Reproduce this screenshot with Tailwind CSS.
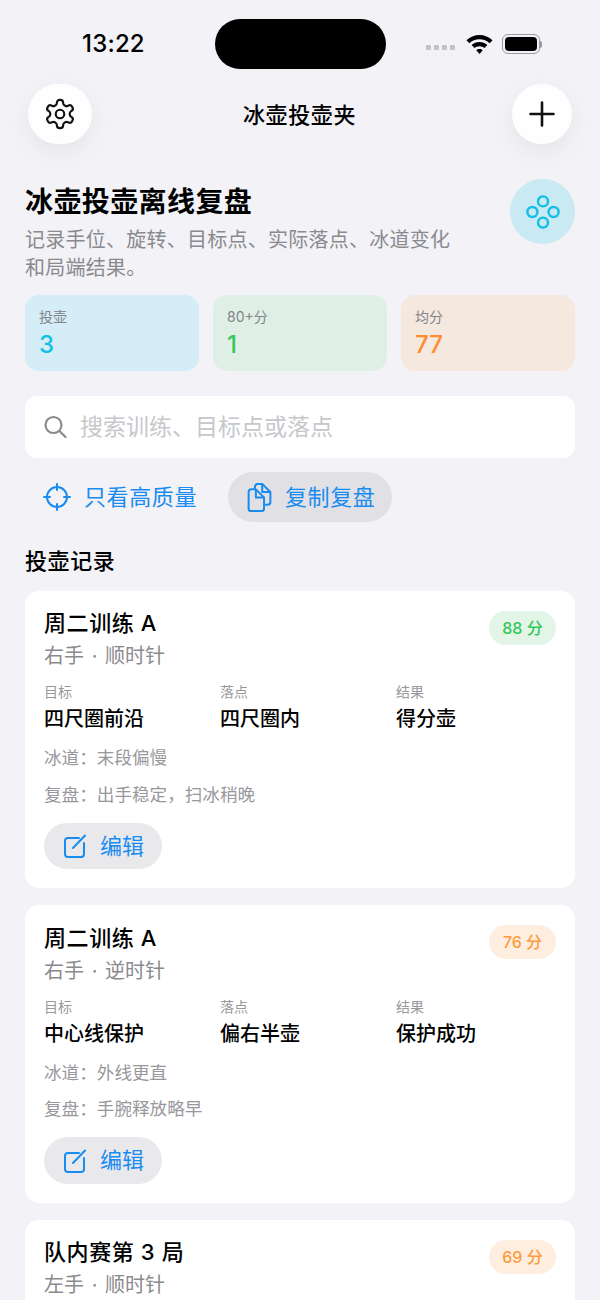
<!DOCTYPE html>
<html lang="zh-CN">
<head>
<meta charset="UTF-8">
<meta name="viewport" content="width=device-width, initial-scale=1.0">
<title>冰壶投壶夹</title>
<script src="https://cdn.jsdelivr.net/npm/@tailwindcss/browser@4"></script>
</head>
<body class="bg-[#f2f2f7] text-black font-['Inter','Noto_Sans_CJK_SC',sans-serif]">
<div class="w-[600px] h-[1300px] overflow-hidden">
  <!-- status bar -->
  <div class="h-[84px] flex items-start pt-[19px]">
    <div class="w-[215px] h-[50px] flex items-center pl-[82px] text-[24px] font-medium tracking-[0.2px]">13:22</div>
    <div class="w-[171px] h-[50px] bg-black rounded-full"></div>
    <div class="flex items-center h-[50px] pl-[40px]">
      <div class="flex gap-[3px] mt-[7px] w-[40px]">
        <span class="w-[5px] h-[5px] rounded-[1px] bg-[#c4c4c8]"></span><span class="w-[5px] h-[5px] rounded-[1px] bg-[#c4c4c8]"></span><span class="w-[5px] h-[5px] rounded-[1px] bg-[#c4c4c8]"></span><span class="w-[5px] h-[5px] rounded-[1px] bg-[#c4c4c8]"></span>
      </div>
      <svg class="mt-[1px]" width="27" height="20" viewBox="0 0 27 20" fill="black"><path d="M13.5 0C8.5 0 4 2 .5 5.2l2.8 3C6 5.700 9.600 4.200 13.500 4.200s7.500 1.500 10.200 4l2.800-3C23 2 18.500 0 13.500 0z"/><path d="M13.500 7c-3 0-5.800 1.200-7.900 3.100l2.900 3c1.300-1.200 3.100-1.900 5-1.900s3.700.7 5 1.900l2.900-3C19.300 8.200 16.500 7 13.500 7z"/><path d="M13.500 14c-1.300 0-2.400.5-3.200 1.200l3.200 3.800 3.200-3.800c-.8-.7-1.900-1.200-3.200-1.200z"/></svg>
      <div class="flex items-center ml-[9px]">
        <div class="w-[38px] h-[20px] rounded-[6px] border border-[#9a9a9e] p-[2px]"><div class="w-full h-full bg-black rounded-[4px]"></div></div>
        <div class="w-[2px] h-[7px] bg-[#9a9a9e] rounded-r-full"></div>
      </div>
    </div>
  </div>

  <!-- nav -->
  <div class="h-[60px] px-[28px] flex items-center justify-between">
    <div class="w-[64px] h-[60px] rounded-full bg-white/90 shadow-[0_8px_24px_rgba(0,0,0,0.06)] flex items-center justify-center">
      <svg width="34" height="34" viewBox="0 0 24 24" fill="none" stroke="#111" stroke-width="1.500" stroke-linejoin="round"><path d="M12.220 2h-.44a2 2 0 0 0-2 2v.18a2 2 0 0 1-1 1.730l-.43.25a2 2 0 0 1-2 0l-.15-.08a2 2 0 0 0-2.730.730l-.22.38a2 2 0 0 0 .730 2.730l.15.1a2 2 0 0 1 1 1.720v.51a2 2 0 0 1-1 1.740l-.15.09a2 2 0 0 0-.730 2.730l.22.38a2 2 0 0 0 2.730.730l.15-.08a2 2 0 0 1 2 0l.43.25a2 2 0 0 1 1 1.730V20a2 2 0 0 0 2 2h.44a2 2 0 0 0 2-2v-.18a2 2 0 0 1 1-1.730l.43-.25a2 2 0 0 1 2 0l.15.08a2 2 0 0 0 2.730-.730l.22-.39a2 2 0 0 0-.730-2.730l-.15-.08a2 2 0 0 1-1-1.740v-.5a2 2 0 0 1 1-1.740l.15-.09a2 2 0 0 0 .730-2.730l-.22-.38a2 2 0 0 0-2.730-.730l-.15.08a2 2 0 0 1-2 0l-.43-.25a2 2 0 0 1-1-1.730V4a2 2 0 0 0-2-2z"/><circle cx="12" cy="12" r="3"/></svg>
    </div>
    <div class="text-[22px] font-medium tracking-[0.6px] leading-[30px] mt-[2px] mr-[5px]">冰壶投壶夹</div>
    <div class="w-[60px] h-[60px] rounded-full bg-white/90 shadow-[0_8px_24px_rgba(0,0,0,0.06)] flex items-center justify-center">
      <svg width="26" height="26" viewBox="0 0 26 26" stroke="#111" stroke-width="2.600" stroke-linecap="round"><path d="M13 1.500v23M1.500 13h23"/></svg>
    </div>
  </div>

  <div class="px-[25px]">
    <!-- hero -->
    <div class="flex justify-between items-start mt-[39px]">
      <div class="w-[440px]">
        <h1 class="text-[28px] font-bold leading-[38px] tracking-[0.4px]">冰壶投壶离线复盘</h1>
        <p class="text-[20px] leading-[28px] text-[#8a8a8e] mt-[5px] w-[432px] tracking-[0.25px]">记录手位、旋转、目标点、实际落点、冰道变化和局端结果。</p>
      </div>
      <div class="w-[65px] h-[65px] rounded-full bg-[#c9e9f3] flex items-center justify-center -mt-[4px]">
        <svg width="36" height="36" viewBox="0 0 36 36" fill="none" stroke="#12bfe6" stroke-width="2.400"><circle cx="18" cy="7.400" r="5"/><circle cx="7.400" cy="18" r="5"/><circle cx="28.600" cy="18" r="5"/><circle cx="18" cy="28.600" r="5"/></svg>
      </div>
    </div>

    <!-- stats -->
    <div class="grid grid-cols-3 gap-[14px] mt-[13px]">
      <div class="h-[76px] rounded-[14px] bg-[#d5edf6] px-[14px] pt-[12px]">
        <div class="text-[14px] leading-[20px] text-[#808488]">投壶</div>
        <div class="text-[24px] leading-[30px] font-medium text-[#12bfe6] mt-[3px]">3</div>
      </div>
      <div class="h-[76px] rounded-[14px] bg-[#dfefe6] px-[14px] pt-[12px]">
        <div class="text-[14px] leading-[20px] text-[#808488]">80+分</div>
        <div class="text-[24px] leading-[30px] font-medium text-[#34c759] mt-[3px]">1</div>
      </div>
      <div class="h-[76px] rounded-[14px] bg-[#f5e8df] px-[14px] pt-[12px]">
        <div class="text-[14px] leading-[20px] text-[#808488]">均分</div>
        <div class="text-[24px] leading-[30px] font-medium text-[#ff8c2e] mt-[3px]">77</div>
      </div>
    </div>

    <!-- search -->
    <div class="h-[62px] rounded-[12px] bg-white mt-[25px] flex items-center pl-[18px] gap-[13px]">
      <svg width="24" height="24" viewBox="0 0 24 24" fill="none" stroke="#8a8a8e" stroke-width="2.200" stroke-linecap="round"><circle cx="10.500" cy="10" r="8"/><path d="M16.500 16l6 6"/></svg>
      <span class="text-[23px] text-[#c7c7cc] mt-[1px]">搜索训练、目标点或落点</span>
    </div>

    <!-- actions -->
    <div class="flex items-center mt-[14px] h-[50px] text-[#1a8cf0] text-[22px] tracking-[0.6px]">
      <div class="flex items-center gap-[13px] pl-[18px] w-[203px]">
        <svg width="28" height="28" viewBox="0 0 28 28" fill="none" stroke="#1a8cf0" stroke-width="2" stroke-linecap="round"><circle cx="14" cy="14" r="10"/><path d="M14 1v6M14 21v6M1 14h6M21 14h6"/></svg>
        <span>只看高质量</span>
      </div>
      <div class="h-[50px] w-[164px] rounded-full bg-[#e0e0e5] flex items-center pl-[19px] gap-[13px]">
        <svg width="25" height="29" viewBox="0 0 26 32" fill="none" stroke="#1a8cf0" stroke-width="2.200" stroke-linejoin="round"><path d="M8 7V4a3 3 0 0 1 3-3h5l9 9v11a3 3 0 0 1-3 3h-3"/><path d="M16 1v9h9"/><path d="M1 10a3 3 0 0 1 3-3h5l9 9v12a3 3 0 0 1-3 3H4a3 3 0 0 1-3-3z"/><path d="M9 7v9h9"/></svg>
        <span>复制复盘</span>
      </div>
    </div>

    <h2 class="text-[22px] font-medium leading-[30px] mt-[24px] tracking-[0.6px]">投壶记录</h2>

    <!-- records -->
    <div class="mt-[15px] flex flex-col gap-[17px]">
      <div class="h-[297px] bg-white rounded-[14px] px-[19px] pt-[17px]">
        <div class="flex justify-between items-start">
          <div>
            <div class="text-[22px] font-medium leading-[30px] tracking-[0.6px]">周二训练 A</div>
            <div class="text-[20px] text-[#8a8a8e] leading-[30px] mt-[3px]">右手 <span class="mx-[2px]">·</span> 顺时针</div>
          </div>
          <div class="w-[67px] h-[34px] mt-[3px] rounded-full bg-[#e2f5e7] text-[#34c759] text-[16px] font-medium flex items-center justify-center">88 分</div>
        </div>
        <div class="grid grid-cols-[176px_176px_176px] mt-[11px]">
          <div><div class="text-[14px] leading-[20px] text-[#98989c]">目标</div><div class="text-[20px] leading-[34px] font-medium">四尺圈前沿</div></div>
          <div><div class="text-[14px] leading-[20px] text-[#98989c]">落点</div><div class="text-[20px] leading-[34px] font-medium">四尺圈内</div></div>
          <div><div class="text-[14px] leading-[20px] text-[#98989c]">结果</div><div class="text-[20px] leading-[34px] font-medium">得分壶</div></div>
        </div>
        <div class="text-[17.6px] leading-[24px] text-[#98989c] mt-[10px]">冰道：末段偏慢</div>
        <div class="text-[17.6px] leading-[24px] text-[#98989c] mt-[13px]">复盘：出手稳定，扫冰稍晚</div>
        <div class="w-[118px] h-[46px] mt-[16px] rounded-full bg-[#e9e9ec] flex items-center pl-[19px] gap-[13px] text-[#1a8cf0] text-[22px]">
          <svg width="24" height="24" viewBox="0 0 24 24" fill="none" stroke="#1a8cf0" stroke-width="2" stroke-linecap="round"><path d="M16 4H5a3 3 0 0 0-3 3v13a3 3 0 0 0 3 3h13a3 3 0 0 0 3-3V9"/><path d="M10 14L22 1.500"/></svg>
          <span>编辑</span>
        </div>
      </div>

      <div class="h-[298px] bg-white rounded-[14px] px-[19px] pt-[18px]">
        <div class="flex justify-between items-start">
          <div>
            <div class="text-[22px] font-medium leading-[30px] tracking-[0.6px]">周二训练 A</div>
            <div class="text-[20px] text-[#8a8a8e] leading-[30px] mt-[3px]">右手 <span class="mx-[2px]">·</span> 逆时针</div>
          </div>
          <div class="w-[67px] h-[34px] mt-[2px] rounded-full bg-[#fdeee0] text-[#ff9a3c] text-[16px] font-medium flex items-center justify-center">76 分</div>
        </div>
        <div class="grid grid-cols-[176px_176px_176px] mt-[11px]">
          <div><div class="text-[14px] leading-[20px] text-[#98989c]">目标</div><div class="text-[20px] leading-[34px] font-medium">中心线保护</div></div>
          <div><div class="text-[14px] leading-[20px] text-[#98989c]">落点</div><div class="text-[20px] leading-[34px] font-medium">偏右半壶</div></div>
          <div><div class="text-[14px] leading-[20px] text-[#98989c]">结果</div><div class="text-[20px] leading-[34px] font-medium">保护成功</div></div>
        </div>
        <div class="text-[17.6px] leading-[24px] text-[#98989c] mt-[10px]">冰道：外线更直</div>
        <div class="text-[17.6px] leading-[24px] text-[#98989c] mt-[12px]">复盘：手腕释放略早</div>
        <div class="w-[118px] h-[47px] mt-[16px] rounded-full bg-[#e9e9ec] flex items-center pl-[19px] gap-[13px] text-[#1a8cf0] text-[22px]">
          <svg width="24" height="24" viewBox="0 0 24 24" fill="none" stroke="#1a8cf0" stroke-width="2" stroke-linecap="round"><path d="M16 4H5a3 3 0 0 0-3 3v13a3 3 0 0 0 3 3h13a3 3 0 0 0 3-3V9"/><path d="M10 14L22 1.500"/></svg>
          <span>编辑</span>
        </div>
      </div>

      <div class="h-[298px] bg-white rounded-[14px] px-[19px] pt-[17px]">
        <div class="flex justify-between items-start">
          <div>
            <div class="text-[22px] font-medium leading-[30px] tracking-[0.6px]">队内赛第 3 局</div>
            <div class="text-[20px] text-[#8a8a8e] leading-[30px] mt-[3px]">左手 <span class="mx-[2px]">·</span> 顺时针</div>
          </div>
          <div class="w-[67px] h-[34px] mt-[3px] rounded-full bg-[#fdeee0] text-[#ff9a3c] text-[16px] font-medium flex items-center justify-center">69 分</div>
        </div>
      </div>
    </div>
  </div>
</div>
</body>
</html>
